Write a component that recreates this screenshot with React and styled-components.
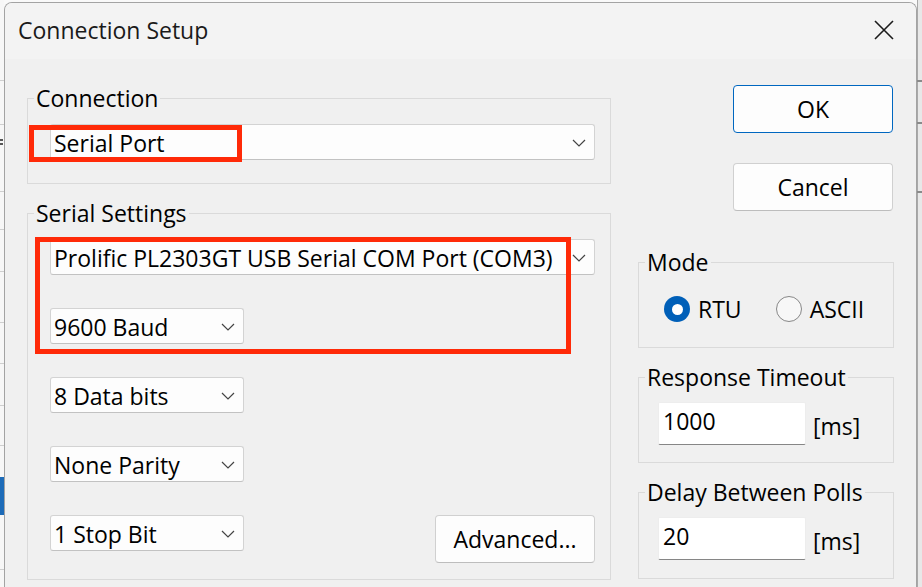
import React from 'react';
import styled, { createGlobalStyle } from 'styled-components';

const GlobalStyle = createGlobalStyle`
  html, body { margin: 0; padding: 0; width: 922px; height: 587px; overflow: hidden; }
  body { font-family: "Open Sans", "Noto Sans", "DejaVu Sans", sans-serif; color: #000; }
  *, *::before, *::after { box-sizing: border-box; }
`;

const FONT = 23;

const Desktop = styled.div`
  width: 922px;
  height: 587px;
  display: grid;
  grid-template-columns: 4px 913px 5px;
  overflow: hidden;
  background: #f9f9f9;
`;

const LeftStrip = styled.div`
  background:
    linear-gradient(#1d6bb8, #1d6bb8) 0 477px / 4px 38px no-repeat,
    linear-gradient(#cfcfcf, #cfcfcf) 0 80px / 4px 1px no-repeat,
    linear-gradient(#cfcfcf, #cfcfcf) 0 124px / 4px 1px no-repeat,
    linear-gradient(#555, #555) 0 139px / 3px 2px no-repeat,
    linear-gradient(#555, #555) 0 143px / 3px 2px no-repeat,
    linear-gradient(#cfcfcf, #cfcfcf) 0 191px / 4px 1px no-repeat,
    linear-gradient(#cfcfcf, #cfcfcf) 0 229px / 4px 1px no-repeat,
    linear-gradient(#cfcfcf, #cfcfcf) 0 271px / 4px 1px no-repeat,
    linear-gradient(#cfcfcf, #cfcfcf) 0 322px / 4px 1px no-repeat,
    linear-gradient(#cfcfcf, #cfcfcf) 0 363px / 4px 1px no-repeat,
    linear-gradient(#cfcfcf, #cfcfcf) 0 405px / 4px 1px no-repeat,
    linear-gradient(#cfcfcf, #cfcfcf) 0 445px / 4px 1px no-repeat,
    linear-gradient(#cfcfcf, #cfcfcf) 0 569px / 4px 1px no-repeat,
    #f7f7f7;
`;

const RightStrip = styled.div`
  background:
    linear-gradient(#8a8a8a, #8a8a8a) 0 80px / 5px 2px no-repeat,
    linear-gradient(#8a8a8a, #8a8a8a) 0 122px / 5px 2px no-repeat,
    linear-gradient(#8a8a8a, #8a8a8a) 0 191px / 5px 2px no-repeat,
    linear-gradient(90deg, #a9a9a9 0, #a9a9a9 1px, #e8e8e8 1px);
`;

const Dialog = styled.div`
  position: relative;
  margin-top: 2px;
  height: 620px;
  background: #f0f0f0;
  border: 1px solid #a3a3a3;
  border-bottom: none;
  border-radius: 8px 8px 0 0;
  overflow: hidden;
  display: flex;
  flex-direction: column;
`;

const TitleBar = styled.div`
  height: 56px;
  flex: none;
  background: #f3f3f3;
  display: flex;
  align-items: center;
  justify-content: space-between;
  padding: 0 22px 2px 13px;
`;

const Title = styled.div`
  font-size: ${FONT}px;
  line-height: 28px;
  color: #1a1a1a;
`;

const CloseButton = styled.div`
  width: 20px;
  height: 20px;
  display: flex;
  align-items: center;
  justify-content: center;
`;

const Body = styled.div`
  display: grid;
  grid-template-columns: 584px 256px;
  column-gap: 27px;
  align-items: start;
  padding: 25px 0 0 22px;
`;

const Column = styled.div`
  display: flex;
  flex-direction: column;
  gap: ${p => p.$gap ?? 15}px;
  margin-top: ${p => p.$mt ?? 0}px;
`;

const Group = styled.fieldset`
  margin: 0;
  padding: 0;
  min-width: 0;
  border: 1px solid #dadada;
`;

const Legend = styled.legend`
  margin-left: 6px;
  padding: 1px 2px 0;
  font-size: ${FONT}px;
  line-height: 27px;
  color: #000;
`;

const GroupBody = styled.div`
  padding: ${p => p.$pad};
  display: flex;
  flex-direction: column;
  gap: ${p => p.$gap ?? 0}px;
`;

const Row = styled.div`
  display: flex;
  align-items: ${p => p.$align || 'center'};
  justify-content: ${p => p.$justify || 'flex-start'};
  gap: ${p => p.$gap ?? 0}px;
`;

const Combo = styled.div`
  width: ${p => p.$w}px;
  height: 36px;
  flex: none;
  background: #fdfdfd;
  border: 1px solid #d3d3d3;
  border-bottom-color: #c2c2c2;
  border-radius: 3px;
  display: flex;
  align-items: center;
  justify-content: space-between;
  padding: 1px 8px 0 3px;
  font-size: ${FONT}px;
  white-space: nowrap;
`;

const ButtonBox = styled.div`
  width: 160px;
  height: 48px;
  flex: none;
  display: flex;
  align-items: center;
  justify-content: center;
  font-size: ${FONT}px;
  background: #fdfdfd;
  border: 1px solid ${p => (p.$default ? '#0067c0' : '#d0d0d0')};
  border-bottom-color: ${p => (p.$default ? '#0067c0' : '#bdbdbd')};
  border-radius: 4px;
  align-self: ${p => p.$self || 'auto'};
  margin-right: ${p => p.$mr ?? 0}px;
  margin-top: ${p => p.$mt ?? 0}px;
`;

const RadioItem = styled.div`
  display: flex;
  align-items: center;
  gap: 8px;
  font-size: ${FONT}px;
  line-height: 28px;
`;

const RadioCircle = styled.span`
  width: 26px;
  height: 26px;
  border-radius: 50%;
  flex: none;
  display: flex;
  align-items: center;
  justify-content: center;
  background: ${p => (p.$on ? '#005fb8' : '#f7f7f7')};
  border: ${p => (p.$on ? 'none' : '1.5px solid #878787')};
  &::after {
    content: '';
    display: ${p => (p.$on ? 'block' : 'none')};
    width: 11px;
    height: 11px;
    border-radius: 50%;
    background: #fff;
  }
`;

const TextInput = styled.div`
  width: 148px;
  height: 43px;
  background: #fff;
  border: 1px solid #ededed;
  border-bottom: 1px solid #868686;
  border-radius: 2px;
  font-size: ${FONT}px;
  display: flex;
  align-items: center;
  padding: 0 4px 5px;
`;

const Unit = styled.span`
  font-size: ${FONT}px;
  padding-top: 4px;
`;

const Highlight = styled.div`
  position: absolute;
  left: ${p => p.$x}px;
  top: ${p => p.$y}px;
  width: ${p => p.$w}px;
  height: ${p => p.$h}px;
  border: 5px solid #ff2a08;
  pointer-events: none;
`;

const Chevron = () => (
  <svg width="14" height="8" viewBox="0 0 14 8" fill="none">
    <path d="M1 1 L7 7 L13 1" stroke="#444" strokeWidth="1.2" />
  </svg>
);

const Select = ({ w, children }) => (
  <Combo $w={w}>
    <span>{children}</span>
    <Chevron />
  </Combo>
);

export default function App() {
  return (
    <>
      <GlobalStyle />
      <Desktop>
        <LeftStrip />
        <Dialog>
          <TitleBar>
            <Title>Connection Setup</Title>
            <CloseButton>
              <svg width="20" height="20" viewBox="0 0 20 20">
                <path d="M1 1 L19 19 M19 1 L1 19" stroke="#1b1b1b" strokeWidth="1.6" />
              </svg>
            </CloseButton>
          </TitleBar>
          <Body>
            <Column $gap={15}>
              <Group>
                <Legend>Connection</Legend>
                <GroupBody $pad="12px 15px 23px 22px">
                  <Select w={545}>Serial Port</Select>
                </GroupBody>
              </Group>
              <Group>
                <Legend>Serial Settings</Legend>
                <GroupBody $pad="12px 15px 16px 22px" $gap={33}>
                  <Select w={545}>Prolific PL2303GT USB Serial COM Port (COM3)</Select>
                  <Select w={194}>9600 Baud</Select>
                  <Select w={194}>8 Data bits</Select>
                  <Select w={194}>None Parity</Select>
                  <Row $align="flex-start" $justify="space-between">
                    <Select w={194}>1 Stop Bit</Select>
                    <ButtonBox>Advanced...</ButtonBox>
                  </Row>
                </GroupBody>
              </Group>
            </Column>
            <Column $gap={0}>
              <ButtonBox $default $self="flex-end" $mr={1} $mt={1}>OK</ButtonBox>
              <ButtonBox $self="flex-end" $mr={1} $mt={30}>Cancel</ButtonBox>
              <Column $gap={15} $mt={37}>
                <Group>
                  <Legend>Mode</Legend>
                  <GroupBody $pad="19px 10px 24px 25px">
                    <Row $gap={34}>
                      <RadioItem><RadioCircle $on />RTU</RadioItem>
                      <RadioItem><RadioCircle />ASCII</RadioItem>
                    </Row>
                  </GroupBody>
                </Group>
                <Group>
                  <Legend>Response Timeout</Legend>
                  <GroupBody $pad="11px 10px 17px 19px">
                    <Row $gap={7}>
                      <TextInput>1000</TextInput>
                      <Unit>[ms]</Unit>
                    </Row>
                  </GroupBody>
                </Group>
                <Group>
                  <Legend>Delay Between Polls</Legend>
                  <GroupBody $pad="11px 10px 18px 19px">
                    <Row $gap={7}>
                      <TextInput>20</TextInput>
                      <Unit>[ms]</Unit>
                    </Row>
                  </GroupBody>
                </Group>
              </Column>
            </Column>
          </Body>
          <Highlight $x={24} $y={122} $w={213} $h={37} />
          <Highlight $x={30} $y={234} $w={536} $h={117} />
        </Dialog>
        <RightStrip />
      </Desktop>
    </>
  );
}
